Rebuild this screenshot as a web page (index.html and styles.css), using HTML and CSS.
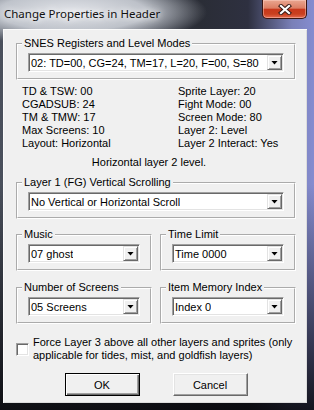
FILE: index.html
```html
<!DOCTYPE html>
<html>
<head>
    <title>Change Properties in Header</title>
    <meta charset="utf-8">
    <link rel="stylesheet" href="styles.css">
</head>
<body>
<div class="window">
    <div class="titlebar">
        <span class="title">Change Properties in Header</span>
        <div class="close-btn">
            <svg width="14" height="11" viewBox="0 0 14 11">
                <path d="M3 2L11 9M11 2L3 9" stroke="#3a1c18" stroke-width="4.2" stroke-linecap="square"/>
                <path d="M3 2L11 9M11 2L3 9" stroke="#fff" stroke-width="2.2" stroke-linecap="square"/>
            </svg>
        </div>
    </div>
    <div class="client">
        <fieldset class="group">
            <legend>SNES Registers and Level Modes</legend>
            <div class="combo"><span class="combo-text">02: TD=00, CG=24, TM=17, L=20, F=00, S=80</span><span class="combo-btn"></span></div>
        </fieldset>

        <div class="info">
            <div>TD &amp; TSW: 00</div><div>Sprite Layer: 20</div>
            <div>CGADSUB: 24</div><div>Fight Mode: 00</div>
            <div>TM &amp; TMW: 17</div><div>Screen Mode: 80</div>
            <div>Max Screens: 10</div><div>Layer 2: Level</div>
            <div>Layout: Horizontal</div><div>Layer 2 Interact: Yes</div>
        </div>

        <div class="summary">Horizontal layer 2 level.</div>

        <fieldset class="group group-scroll">
            <legend>Layer 1 (FG) Vertical Scrolling</legend>
            <div class="combo"><span class="combo-text">No Vertical or Horizontal Scroll</span><span class="combo-btn"></span></div>
        </fieldset>

        <div class="group-row row-music">
            <fieldset class="group">
                <legend>Music</legend>
                <div class="combo"><span class="combo-text">07 ghost</span><span class="combo-btn"></span></div>
            </fieldset>
            <fieldset class="group">
                <legend>Time Limit</legend>
                <div class="combo"><span class="combo-text">Time 0000</span><span class="combo-btn"></span></div>
            </fieldset>
        </div>

        <div class="group-row row-screens">
            <fieldset class="group">
                <legend>Number of Screens</legend>
                <div class="combo"><span class="combo-text">05 Screens</span><span class="combo-btn"></span></div>
            </fieldset>
            <fieldset class="group">
                <legend>Item Memory Index</legend>
                <div class="combo"><span class="combo-text">Index 0</span><span class="combo-btn"></span></div>
            </fieldset>
        </div>

        <label class="check-row">
            <span class="checkbox"></span>
            <span class="check-text">Force Layer 3 above all other layers and sprites (only<br>applicable for tides, mist, and goldfish layers)</span>
        </label>

        <div class="buttons">
            <button class="btn btn-default">OK</button>
            <button class="btn">Cancel</button>
        </div>
    </div>
</div>
</body>
</html>
```

FILE: styles.css
```css
*
{
    box-sizing: border-box;
}
body
{
    margin: 0px;
    padding: 0px;
    background: #15171c;
    font-family: "Liberation Sans", Arial, sans-serif;
    font-size: 11px;
    color: #000;
}
.window
{
    width: 314px;
    height: 410px;
    display: flex;
    flex-direction: column;
    background:
        radial-gradient(135px 34px at 72px 12px, rgba(232,234,239,0.97) 0%, rgba(212,216,223,0.85) 55%, rgba(200,205,213,0) 100%),
        linear-gradient(to bottom, rgba(0,0,0,0) 0%, rgba(0,0,0,0) 45%, rgba(8,8,12,0.9) 100%),
        linear-gradient(to right, #4a505c 0px, #3c414c 140px, #2a2d36 200px, #2e3040 248px, #7a80b8 292px, #858cd0 314px);
}
.titlebar
{
    height: 29px;
    display: flex;
    align-items: flex-start;
}
.title
{
    padding: 6px 0 0 4px;
    font-family: "Noto Sans", "Open Sans", sans-serif;
    font-size: 11.5px;
    line-height: 16px;
    color: #111;
    text-shadow: 0 0 6px #fff, 0 0 10px #fff;
}
.close-btn
{
    width: 45px;
    height: 19px;
    margin: 0 7px 0 auto;
    display: flex;
    align-items: center;
    justify-content: center;
    border: 1px solid #3b1612;
    border-top: none;
    border-radius: 0 0 5px 5px;
    background: linear-gradient(#eaa690 0%, #dc7e64 45%, #c8381c 52%, #c9401f 78%, #e56a50 100%);
    box-shadow: inset 0 0 0 1px rgba(255, 214, 204, 0.45);
}
.client
{
    flex: 1;
    margin: 0 7px 7px 3px;
    padding: 8px 11px 7px 13px;
    background: #f0f0f0;
    box-shadow: inset 1px 1px 0 #fbfbfb, inset -1px -1px 0 #dcdcdc;
}
.group
{
    margin: 0;
    min-width: 0;
    padding: 3px 10px 6px 10px;
    border: 2px groove #fff;
}
.group legend
{
    margin-left: -6px;
    padding: 0 2px;
    line-height: 13px;
}
.combo
{
    height: 19px;
    display: flex;
    align-items: center;
    background: #fff;
    border: 1px solid;
    border-color: #a0a0a0 #fff #fff #a0a0a0;
    box-shadow: inset 1px 1px 0 #696969, inset -1px -1px 0 #e3e3e3;
}
.combo-text
{
    padding-left: 2px;
    white-space: nowrap;
    overflow: hidden;
}
.combo-btn
{
    width: 15px;
    height: 15px;
    margin: 0 1px 0 auto;
    flex-shrink: 0;
    display: flex;
    align-items: center;
    justify-content: center;
    background: #f0f0f0;
    border: 1px solid;
    border-color: #e3e3e3 #696969 #696969 #e3e3e3;
    box-shadow: inset 1px 1px 0 #fff, inset -1px -1px 0 #a0a0a0;
}
.combo-btn::after
{
    content: "";
    width: 7px;
    height: 4px;
    background: #000;
    clip-path: polygon(0 0, 100% 0, 50% 100%);
}
.info
{
    margin: 5px 0 0 6px;
    display: grid;
    grid-template-columns: 156px auto;
    line-height: 13px;
}
.summary
{
    margin-top: 6px;
    padding-right: 14px;
    line-height: 13px;
    text-align: center;
}
.group-scroll
{
    margin-top: 7px;
}
.group-row
{
    display: grid;
    grid-template-columns: 1fr 1fr;
    gap: 8px;
}
.row-music
{
    margin-top: 9px;
}
.row-screens
{
    margin-top: 10px;
}
.check-row
{
    margin-top: 12px;
    display: flex;
    align-items: center;
    gap: 4px;
    line-height: 13px;
}
.checkbox
{
    width: 13px;
    height: 13px;
    flex-shrink: 0;
    background: #fff;
    border: 1px solid;
    border-color: #a0a0a0 #fff #fff #a0a0a0;
    box-shadow: inset 1px 1px 0 #696969, inset -1px -1px 0 #e3e3e3;
}
.buttons
{
    margin-top: 11px;
    display: flex;
    justify-content: center;
    gap: 33px;
}
.btn
{
    width: 75px;
    height: 23px;
    padding: 0;
    font: inherit;
    color: #000;
    background: #f0f0f0;
    border: 1px solid;
    border-color: #fff #696969 #696969 #fff;
    box-shadow: inset -1px -1px 0 #a0a0a0, inset 1px 1px 0 #e3e3e3;
}
.btn-default
{
    border: 1px solid #000;
    box-shadow: inset 1px 1px 0 #fff, inset -1px -1px 0 #696969, inset -2px -2px 0 #a0a0a0;
}
```
